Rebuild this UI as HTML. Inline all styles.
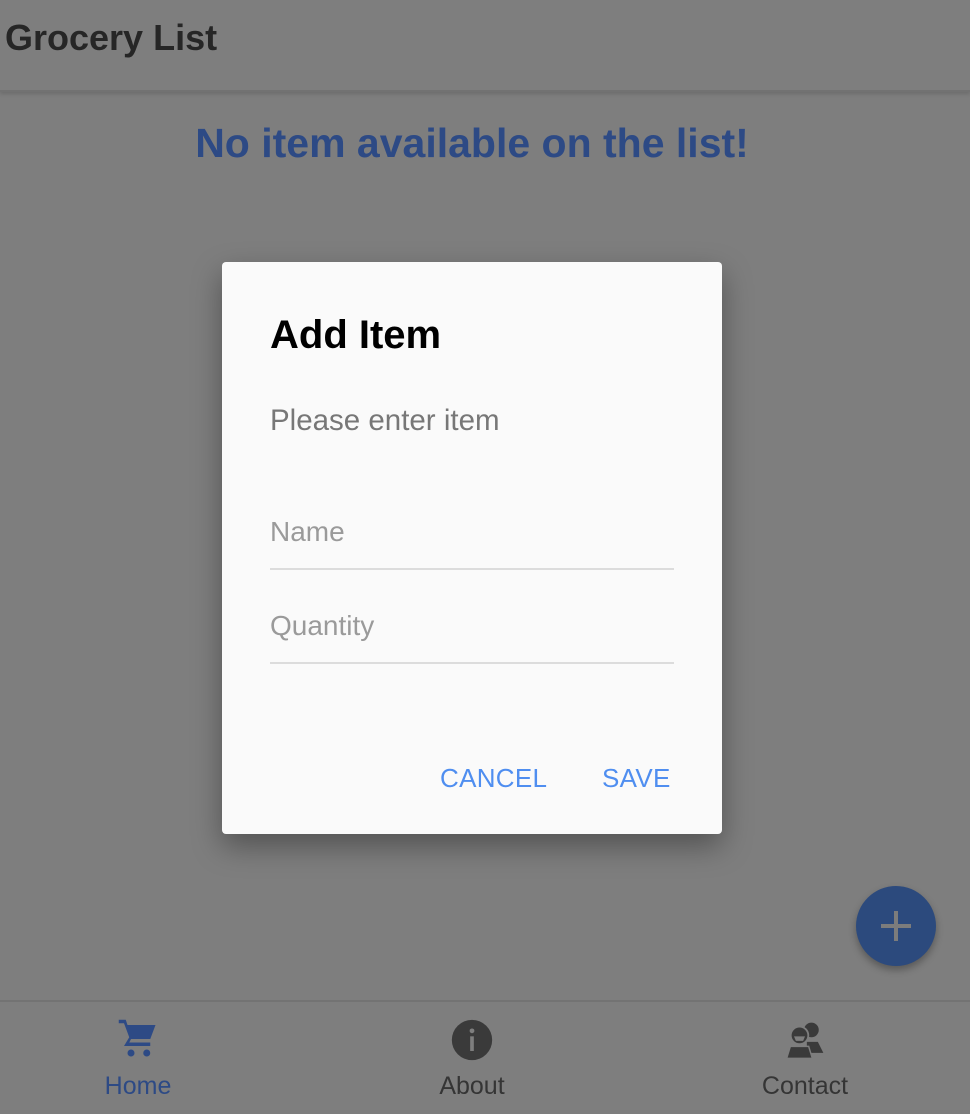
<!DOCTYPE html>
<html><head><meta charset="utf-8">
<style>
*{margin:0;padding:0;box-sizing:border-box}
body{width:970px;height:1114px;background:#7e7e7e;font-family:"Liberation Sans",sans-serif;position:relative;overflow:hidden}
.bar{position:absolute;left:0;top:0;width:970px;height:92px;background:#7e7e7e;border-bottom:2px solid #727272;box-shadow:0 2px 4px rgba(0,0,0,.15)}
.bar h1{position:absolute;left:5px;top:17px;font-size:36px;font-weight:bold;color:#262626}
.empty{position:absolute;top:120px;left:0;width:944px;text-align:center;font-size:41px;color:#2d4a85;font-weight:bold}
.dlg{position:absolute;left:222px;top:262px;width:500px;height:572px;background:#fafafa;border-radius:4px;box-shadow:0 12px 30px rgba(0,0,0,.35)}
.dlg h2{position:absolute;left:48px;top:51px;font-size:40px;font-weight:bold;color:#000}
.dlg .p{position:absolute;left:48px;top:142px;font-size:29.5px;color:#777}
.f{position:absolute;left:48px;width:404px;border-bottom:2px solid #dcdcdc;height:54px;font-size:28px;color:#9a9a9a}
.btn{position:absolute;top:501px;font-size:26px;color:#4f8ef0;letter-spacing:.3px}
.fab{position:absolute;left:856px;top:886px;width:80px;height:80px;border-radius:50%;background:#2c4a7d;box-shadow:0 4px 8px rgba(0,0,0,.3)}
.fab:before{content:"";position:absolute;left:25px;top:38px;width:30px;height:4px;background:#7c7c7c}
.fab:after{content:"";position:absolute;left:38px;top:25px;width:4px;height:30px;background:#7c7c7c}
.nav{position:absolute;left:0;top:1000px;width:970px;height:114px;border-top:2px solid #737373}
.it{position:absolute;top:0;width:200px;text-align:center;font-size:25px}
.it svg{display:block;margin:16px auto 0}
</style></head><body>
<div class="bar"><h1>Grocery List</h1></div>
<div class="empty">No item available on the list!</div>
<div class="dlg">
<h2>Add Item</h2>
<div class="p">Please enter item</div>
<div class="f" style="top:254px">Name</div>
<div class="f" style="top:348px">Quantity</div>
<div class="btn" style="left:218px">CANCEL</div>
<div class="btn" style="left:380px">SAVE</div>
</div>
<div class="fab"></div>
<div class="nav">
<div class="it" style="left:38px;color:#2d4a85"><svg width="44" height="42" viewBox="0 0 24 24"><path fill="#2d4a85" d="M1 1h4l1 3h16l-3 8H8l-1 2h12v2H4l3-5L4 3H1z"/><circle cx="8" cy="20" r="2" fill="#2d4a85"/><circle cx="17" cy="20" r="2" fill="#2d4a85"/></svg><div style="margin-top:12px">Home</div></div>
<div class="it" style="left:372px;color:#353535"><svg width="44" height="44" viewBox="0 0 24 24"><circle cx="12" cy="12" r="11" fill="#3a3a3a"/><rect x="11" y="10" width="2" height="8" fill="#7e7e7e"/><circle cx="12" cy="7" r="1.3" fill="#7e7e7e"/></svg><div style="margin-top:10px">About</div></div>
<div class="it" style="left:705px;color:#353535"><svg width="44" height="44" viewBox="0 0 24 24"><circle cx="15.5" cy="6.5" r="4" fill="#3a3a3a"/><path d="M13 13h6l3 6h-9z" fill="#3a3a3a"/><circle cx="9" cy="9.5" r="4.8" fill="#3a3a3a" stroke="#7e7e7e" stroke-width="1"/><path d="M6 10h6l-1 2.5H7z" fill="#7e7e7e"/><path d="M2 22l2-6.5h10l2 6.5z" fill="#3a3a3a" stroke="#7e7e7e" stroke-width=".8"/></svg><div style="margin-top:10px">Contact</div></div>
</div>
</body></html>
